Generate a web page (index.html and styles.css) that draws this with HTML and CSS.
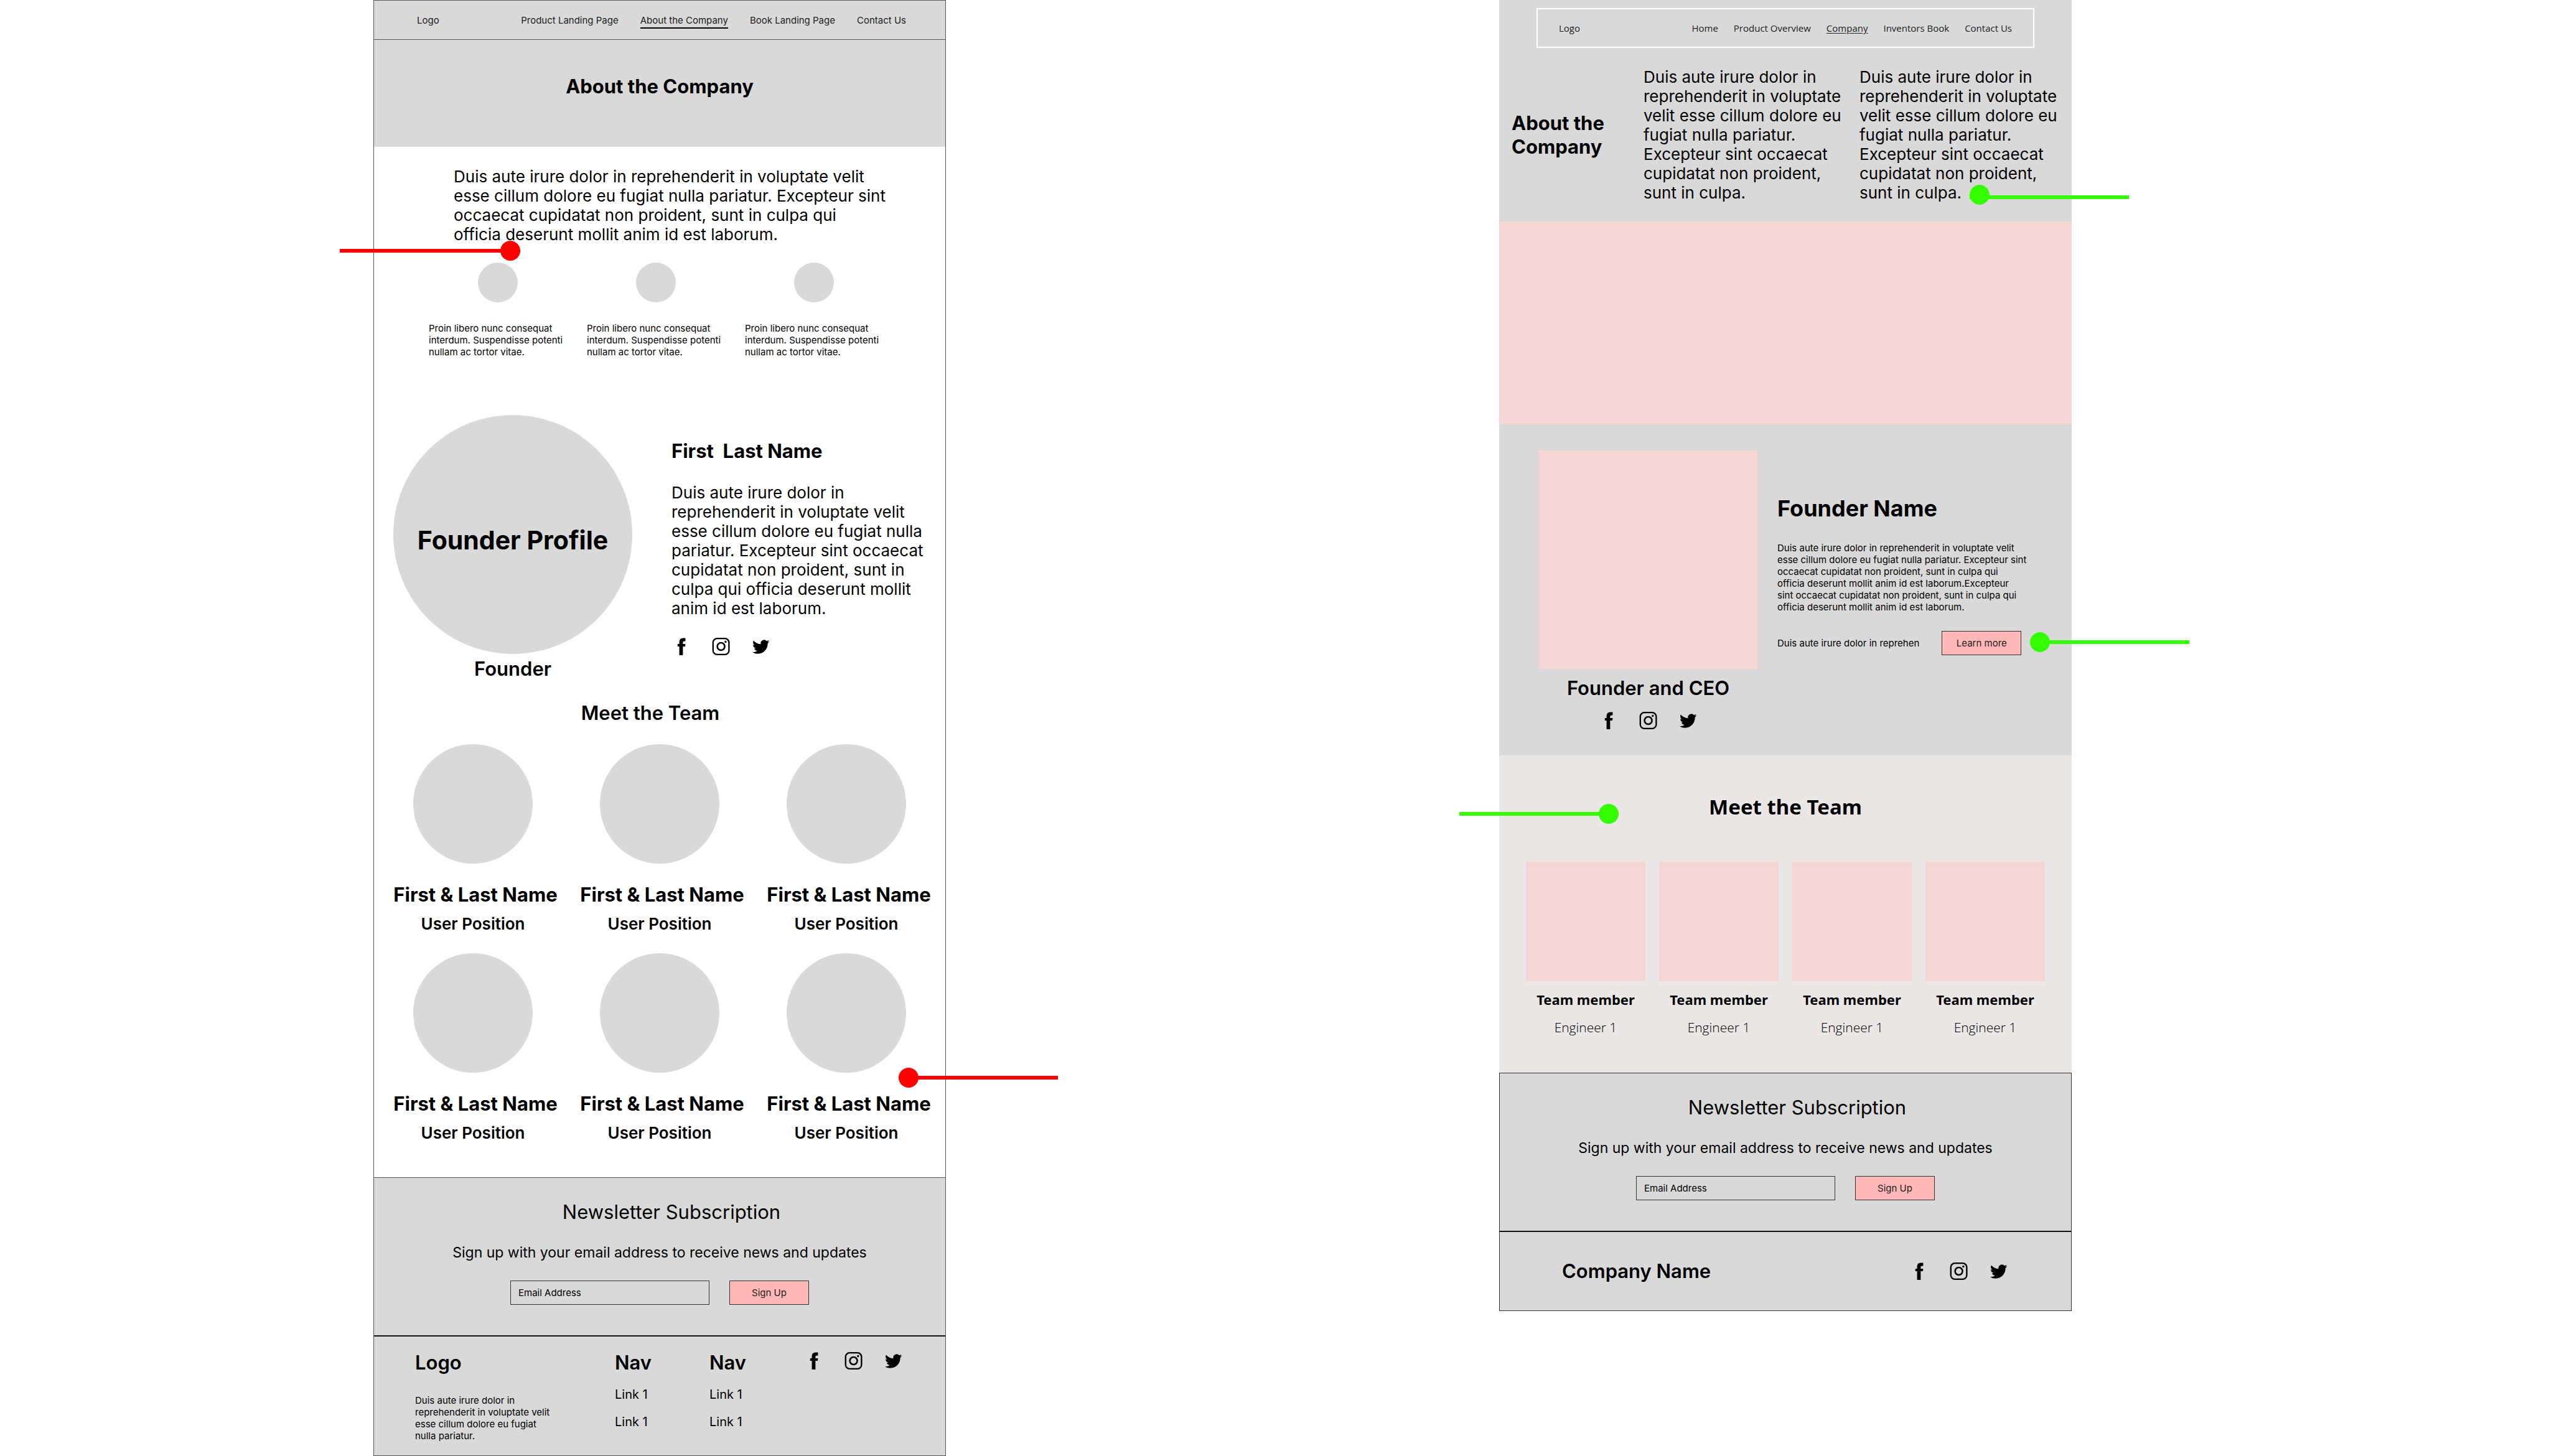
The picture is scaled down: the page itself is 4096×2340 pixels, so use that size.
FILE: index.html
```html
<!DOCTYPE html>
<html lang="en">
<head>
<meta charset="utf-8">
<title>About the Company wireframes</title>
<link rel="stylesheet" href="styles.css">
</head>
<body>
<svg class="sprite" aria-hidden="true">
  <symbol id="facebook" viewBox="0 0 150 150"><path d="M105 12V35H96Q86 35 86 44V56H105L103 75H86V141H59V75H46V56H59V42Q59 12 88 12Z"/></symbol>
  <symbol id="instagram" viewBox="0 0 150 150"><rect x="13" y="15" width="120" height="120" rx="30" fill="none" stroke="#000" stroke-width="11"/><circle cx="73" cy="75" r="28" fill="none" stroke="#000" stroke-width="12"/><circle cx="107" cy="40" r="8"/></symbol>
  <symbol id="twitter" viewBox="0 0 150 150"><path transform="translate(9.5 13.5) scale(5.35)" d="M23.953 4.57a10 10 0 01-2.825.775 4.958 4.958 0 002.163-2.723c-.951.555-2.005.959-3.127 1.184a4.92 4.92 0 00-8.384 4.482C7.69 8.095 4.067 6.13 1.64 3.162a4.822 4.822 0 00-.666 2.475c0 1.71.87 3.213 2.188 4.096a4.904 4.904 0 01-2.228-.616v.06a4.923 4.923 0 003.946 4.827 4.996 4.996 0 01-2.212.085 4.936 4.936 0 004.604 3.417 9.867 9.867 0 01-6.102 2.105c-.39 0-.779-.023-1.17-.067a13.995 13.995 0 007.557 2.209c9.053 0 13.998-7.496 13.998-13.985 0-.21 0-.42-.015-.63A9.935 9.935 0 0024 4.59z"/></symbol>
</svg>
<div class="board">
  <article class="frame before">
    <header class="topbar">
      <a href="#">Logo</a>
      <nav class="links">
        <a href="#">Product Landing Page</a>
        <a href="#" class="current">About the Company</a>
        <a href="#">Book Landing Page</a>
        <a href="#">Contact Us</a>
      </nav>
    </header>
    <section class="title-band"><h1 class="heading">About the Company</h1></section>
    <p class="lead intro">Duis aute irure dolor in reprehenderit in voluptate velit<br>esse cillum dolore eu fugiat nulla pariatur. Excepteur sint<br>occaecat cupidatat non proident, sunt in culpa qui<br>officia deserunt mollit anim id est laborum.</p>
    <section class="features">
      <div class="feature"><div class="dot"></div><p class="small">Proin libero nunc consequat interdum. Suspendisse potenti nullam ac tortor vitae.</p></div>
      <div class="feature"><div class="dot"></div><p class="small">Proin libero nunc consequat interdum. Suspendisse potenti nullam ac tortor vitae.</p></div>
      <div class="feature"><div class="dot"></div><p class="small">Proin libero nunc consequat interdum. Suspendisse potenti nullam ac tortor vitae.</p></div>
    </section>
    <section class="profile">
      <figure class="portrait">
        <div class="portrait-disc">Founder Profile</div>
        <figcaption class="heading semi">Founder</figcaption>
      </figure>
      <div class="bio">
        <h2 class="heading double-space">First  Last Name</h2>
        <p class="lead">Duis aute irure dolor in<br>reprehenderit in voluptate velit<br>esse cillum dolore eu fugiat nulla<br>pariatur. Excepteur sint occaecat<br>cupidatat non proident, sunt in<br>culpa qui officia deserunt mollit<br>anim id est laborum.</p>
        <div class="social">
          <a href="#" aria-label="Facebook"><svg><use href="#facebook"/></svg></a>
          <a href="#" aria-label="Instagram"><svg><use href="#instagram"/></svg></a>
          <a href="#" aria-label="Twitter"><svg><use href="#twitter"/></svg></a>
        </div>
      </div>
    </section>
    <section class="crew">
      <h2 class="heading semi">Meet the Team</h2>
      <div class="crew-grid">
        <div class="person"><div class="disc"></div><h3 class="heading">First &amp; Last Name</h3><p class="role">User Position</p></div>
        <div class="person"><div class="disc"></div><h3 class="heading">First &amp; Last Name</h3><p class="role">User Position</p></div>
        <div class="person"><div class="disc"></div><h3 class="heading">First &amp; Last Name</h3><p class="role">User Position</p></div>
        <div class="person"><div class="disc"></div><h3 class="heading">First &amp; Last Name</h3><p class="role">User Position</p></div>
        <div class="person"><div class="disc"></div><h3 class="heading">First &amp; Last Name</h3><p class="role">User Position</p></div>
        <div class="person"><div class="disc"></div><h3 class="heading">First &amp; Last Name</h3><p class="role">User Position</p></div>
      </div>
    </section>
    <section class="newsletter">
      <h2>Newsletter Subscription</h2>
      <p>Sign up with your email address to receive news and updates</p>
      <form class="signup">
        <input type="email" aria-label="Email Address" placeholder="Email Address">
        <button type="button" class="button">Sign Up</button>
      </form>
    </section>
    <footer class="site-footer">
      <div class="about"><h2 class="heading semi">Logo</h2><p class="small">Duis aute irure dolor in<br>reprehenderit in voluptate velit<br>esse cillum dolore eu fugiat<br>nulla pariatur.</p></div>
      <nav class="footer-nav"><h2 class="heading semi">Nav</h2><a href="#">Link 1</a><a href="#">Link 1</a></nav>
      <nav class="footer-nav"><h2 class="heading semi">Nav</h2><a href="#">Link 1</a><a href="#">Link 1</a></nav>
      <div class="social">
        <a href="#" aria-label="Facebook"><svg><use href="#facebook"/></svg></a>
        <a href="#" aria-label="Instagram"><svg><use href="#instagram"/></svg></a>
        <a href="#" aria-label="Twitter"><svg><use href="#twitter"/></svg></a>
      </div>
    </footer>
    <div class="pin pin-left red pin-intro"></div>
    <div class="pin pin-right red pin-crew"></div>
  </article>

  <article class="frame after">
    <section class="hero">
      <header class="boxed-nav">
        <a href="#">Logo</a>
        <nav class="links">
          <a href="#">Home</a>
          <a href="#">Product Overview</a>
          <a href="#" class="current">Company</a>
          <a href="#">Inventors Book</a>
          <a href="#">Contact Us</a>
        </nav>
      </header>
      <div class="hero-body">
        <h1 class="heading">About the Company</h1>
        <p class="lead">Duis aute irure dolor in<br>reprehenderit in voluptate<br>velit esse cillum dolore eu<br>fugiat nulla pariatur.<br>Excepteur sint occaecat<br>cupidatat non proident,<br>sunt in culpa.</p>
        <p class="lead">Duis aute irure dolor in<br>reprehenderit in voluptate<br>velit esse cillum dolore eu<br>fugiat nulla pariatur.<br>Excepteur sint occaecat<br>cupidatat non proident,<br>sunt in culpa.</p>
      </div>
    </section>
    <div class="banner"></div>
    <section class="founder">
      <figure class="founder-card">
        <div class="photo"></div>
        <figcaption class="heading semi">Founder and CEO</figcaption>
        <div class="social">
          <a href="#" aria-label="Facebook"><svg><use href="#facebook"/></svg></a>
          <a href="#" aria-label="Instagram"><svg><use href="#instagram"/></svg></a>
          <a href="#" aria-label="Twitter"><svg><use href="#twitter"/></svg></a>
        </div>
      </figure>
      <div class="founder-text">
        <h2>Founder Name</h2>
        <p class="small">Duis aute irure dolor in reprehenderit in voluptate velit<br>esse cillum dolore eu fugiat nulla pariatur. Excepteur sint<br>occaecat cupidatat non proident, sunt in culpa qui<br>officia deserunt mollit anim id est laborum.Excepteur<br>sint occaecat cupidatat non proident, sunt in culpa qui<br>officia deserunt mollit anim id est laborum.</p>
        <div class="more"><p class="small">Duis aute irure dolor in reprehen</p><button type="button" class="button">Learn more</button></div>
      </div>
    </section>
    <section class="team">
      <h2>Meet the Team</h2>
      <div class="team-grid">
        <div class="member"><div class="tile"></div><h3>Team member</h3><p>Engineer 1</p></div>
        <div class="member"><div class="tile"></div><h3>Team member</h3><p>Engineer 1</p></div>
        <div class="member"><div class="tile"></div><h3>Team member</h3><p>Engineer 1</p></div>
        <div class="member"><div class="tile"></div><h3>Team member</h3><p>Engineer 1</p></div>
      </div>
    </section>
    <section class="newsletter">
      <h2>Newsletter Subscription</h2>
      <p>Sign up with your email address to receive news and updates</p>
      <form class="signup">
        <input type="email" aria-label="Email Address" placeholder="Email Address">
        <button type="button" class="button">Sign Up</button>
      </form>
    </section>
    <footer class="company-footer">
      <h2 class="heading semi">Company Name</h2>
      <div class="social">
        <a href="#" aria-label="Facebook"><svg><use href="#facebook"/></svg></a>
        <a href="#" aria-label="Instagram"><svg><use href="#instagram"/></svg></a>
        <a href="#" aria-label="Twitter"><svg><use href="#twitter"/></svg></a>
      </div>
    </footer>
    <div class="pin pin-right green pin-hero"></div>
    <div class="pin pin-right green pin-founder"></div>
    <div class="pin pin-left green pin-team"></div>
  </article>
</div>
</body>
</html>
```

FILE: styles.css
```css
* { box-sizing: border-box; }
body, h1, h2, h3, p, figure { margin: 0; }
body { background: #fff; color: #000; font-family: Inter, "Liberation Sans", sans-serif; }
a { color: inherit; text-decoration: none; }
.sprite { display: none; }

/* canvas with the two page designs */
.board { display: grid; grid-template-columns: 920fr 920fr; column-gap: 889px; padding: 0 767px 0 600px; align-items: start; }
.frame { position: relative; }

/* shared text */
.heading { font-size: 31px; line-height: 38px; font-weight: 700; }
.heading.semi { font-weight: 600; }
.lead { font-size: 26px; line-height: 31px; white-space: nowrap; }
.small { font-size: 15px; line-height: 19px; }
.links { display: flex; }
.social { display: flex; gap: 32px; }
.social a, .social svg { display: block; width: 32px; height: 32px; }
.button { width: 128px; height: 39px; padding: 0; border: 1px solid #333; background: #ffb7b7; color: #222; font: 15px/19px Inter, "Liberation Sans", sans-serif; }

/* left design */
.before { border: 1px solid #555; }
.topbar { display: flex; justify-content: space-between; align-items: center; height: 63px; padding: 0 63px 0 69px; background: #d9d9d9; border-bottom: 1px solid #555; font-size: 15px; line-height: 19px; color: #222; }
.topbar .links { gap: 35px; }
.topbar .links a { padding: 4px 0 2px; border-bottom: 2px solid transparent; }
.topbar .links .current { border-color: #000; }
.title-band { padding: 56px 0 78px; background: #d9d9d9; text-align: center; }
.intro { padding: 32px 0 0 128px; }
.features { display: grid; grid-template-columns: repeat(3, 222px); gap: 32px; padding: 30px 0 0 88px; }
.feature { display: grid; gap: 32px; justify-items: center; }
.dot { width: 64px; height: 64px; border-radius: 50%; background: #d9d9d9; }
.profile { display: flex; gap: 63px; padding: 92px 0 0 31px; }
.portrait { display: grid; gap: 5px; width: 384px; text-align: center; }
.portrait-disc { display: flex; align-items: center; justify-content: center; height: 384px; padding-top: 18px; border-radius: 50%; background: #d9d9d9; font-size: 41px; line-height: 50px; font-weight: 700; }
.bio { padding-top: 39px; }
.bio .lead { padding: 32px 0 30px; }
.double-space { white-space: pre; }
.crew { padding: 33px 9px 55px; text-align: center; }
.crew > .heading { padding-right: 30px; }
.crew-grid { display: grid; grid-template-columns: repeat(3, 1fr); row-gap: 31px; padding-top: 31px; }
.disc { width: 192px; height: 192px; margin: 0 auto 31px; border-radius: 50%; background: #d9d9d9; }
.person .heading { padding-left: 8px; white-space: nowrap; }
.role { padding-top: 12px; font-size: 26px; line-height: 32px; font-weight: 600; }

/* newsletter block, used by both designs */
.newsletter { padding: 36px 0 49px; border-top: 1px solid #555; background: #d9d9d9; text-align: center; }
.newsletter h2 { padding-left: 38px; font-size: 31px; line-height: 38px; font-weight: 400; }
.newsletter p { padding: 32px 0 31px; font-size: 23px; line-height: 28px; }
.signup { display: flex; justify-content: center; gap: 32px; }
.signup input { width: 320px; height: 39px; padding: 0 12px; border: 1px solid #333; border-radius: 0; background: transparent; color: #000; font: 15px/19px Inter, "Liberation Sans", sans-serif; }
.signup input::placeholder { color: #000; opacity: 1; }

.site-footer { display: grid; grid-template-columns: 321px 152px 152px 1fr; padding: 23px 0 22px 66px; border-top: 2px solid #111; background: #d9d9d9; }
.about .small { padding-top: 32px; }
.footer-nav { display: grid; align-content: start; gap: 20px; font-size: 20px; line-height: 24px; }

/* right design */
.hero { padding: 13px 0 31px; background: #d9d9d9; }
.boxed-nav { display: flex; justify-content: space-between; align-items: center; height: 64px; margin: 0 60px; padding: 0 34px; border: 2px solid #fff; font: 400 15px/20px "Open Sans", "Noto Sans", sans-serif; color: #222; }
.boxed-nav .links { gap: 25px; }
.boxed-nav .current { text-decoration: underline; text-underline-offset: 2px; }
.hero-body { display: grid; grid-template-columns: 183px 318px 318px; gap: 29px; align-items: center; padding: 31px 0 0 20px; }
.banner { height: 326px; background: #f6d6d4; }
.founder { display: flex; gap: 32px; padding: 42px 0 40px 64px; background: #d9d9d9; }
.founder-card { display: grid; justify-items: center; width: 351px; }
.photo { width: 351px; height: 351px; background: #f6d6d4; }
.founder-card .heading { padding: 12px 0 17px; }
.founder-text { padding-top: 71px; white-space: nowrap; }
.founder-text h2 { margin-bottom: 32px; font-size: 36px; line-height: 44px; font-weight: 700; }
.more { display: flex; align-items: center; gap: 36px; padding-top: 29px; }
.team { padding: 61px 43px 61px; background: #ebe7e6; text-align: center; font-family: "Noto Sans", "Open Sans", sans-serif; }
.team h2 { font-size: 33px; line-height: 44px; font-weight: 700; }
.team-grid { display: grid; grid-template-columns: repeat(4, 1fr); gap: 22px; padding-top: 66px; }
.tile { height: 192px; background: #f6d6d4; }
.member h3 { padding-top: 13px; font-size: 22px; line-height: 32px; font-weight: 700; }
.member p { padding-top: 17px; font: 300 21px/24px "Open Sans", "Noto Sans", sans-serif; }
.after .newsletter { border: 1px solid #333; border-bottom: 0; }
.company-footer { display: flex; justify-content: space-between; align-items: center; padding: 44px 100px; border: 1px solid #333; border-top: 2px solid #111; background: #d9d9d9; }

/* annotation pins laid over the designs */
.pin { position: absolute; height: 32px; width: 256px; background: linear-gradient(currentColor, currentColor) center / 100% 6px no-repeat; }
.pin::after { content: ""; position: absolute; top: 0; width: 32px; height: 32px; border-radius: 50%; background: currentColor; }
.pin-left::after { right: 0; }
.pin-right::after { left: 0; }
.red { color: #f00; }
.green { color: #3f0; }
.pin-intro { left: -55px; top: 386px; width: 290px; }
.pin-crew { left: 843px; top: 1715px; }
.pin-hero { left: 756px; top: 297px; background-position: 0 17px; }
.pin-founder { left: 853px; top: 1016px; }
.pin-team { left: -64px; top: 1292px; }
```
